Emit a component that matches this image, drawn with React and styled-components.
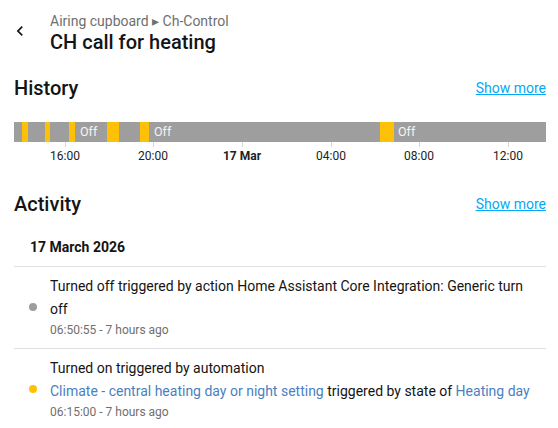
import React from "react";
import styled, { createGlobalStyle } from "styled-components";

const GlobalStyle = createGlobalStyle`
  html, body {
    margin: 0;
    background: #fff;
    font-family: Roboto, "Noto Sans", sans-serif;
    color: #141414;
  }
`;

const Page = styled.div`
  width: 558px;
  height: 428px;
  box-sizing: border-box;
  padding: 0 12px 0 14px;
  overflow: hidden;
`;

const Header = styled.div`
  display: flex;
  align-items: center;
  height: 64px;
  box-sizing: border-box;
  padding-top: 2px;
`;

const BackButton = styled.button`
  width: 20px;
  height: 20px;
  padding: 0;
  margin: -5px 20px 0 -4px;
  border: none;
  background: none;
  display: flex;
  align-items: center;
  justify-content: center;
`;

const Titles = styled.div`
  display: flex;
  flex-direction: column;
`;

const Breadcrumb = styled.div`
  font-size: 14px;
  color: #6f6f6f;
  line-height: 18px;
`;

const Title = styled.div`
  font-size: 20px;
  font-weight: 500;
  line-height: 24px;
  color: #141414;
`;

const SectionHead = styled.div`
  display: flex;
  justify-content: space-between;
  align-items: center;
  height: 48px;
  margin-top: ${(p) => p.$top || 0}px;
`;

const SectionTitle = styled.div`
  font-size: 20px;
  font-weight: 500;
  color: #141414;
`;

const ShowMore = styled.a`
  font-size: 14px;
  color: #03a9f4;
  text-decoration: underline;
  cursor: pointer;
`;

const Timeline = styled.div`
  margin-top: 10px;
`;

const Bar = styled.div`
  position: relative;
  height: 20px;
  background: #9e9e9e;
`;

const OnSegment = styled.div`
  position: absolute;
  top: 0;
  bottom: 0;
  background: #ffc107;
`;

const OffLabel = styled.span`
  position: absolute;
  top: 0;
  line-height: 20px;
  font-size: 12.5px;
  color: #f4f4f4;
`;

const Axis = styled.div`
  position: relative;
  height: 24px;
`;

const Tick = styled.div`
  position: absolute;
  top: 0;
  width: 1px;
  height: 5px;
  background: #d8d8d8;
`;

const TickLabel = styled.span`
  position: absolute;
  top: 7px;
  transform: translateX(-50%);
  font-size: 12px;
  color: #222;
  font-weight: ${(p) => (p.$bold ? 700 : 400)};
  white-space: nowrap;
`;

const DateHead = styled.div`
  font-size: 14px;
  font-weight: 700;
  padding: 11px 0 0 16px;
  height: 39px;
  box-sizing: border-box;
  border-bottom: 1px solid #e0e0e0;
`;

const Entry = styled.div`
  display: flex;
  align-items: center;
  padding: 8px 0 9px 0;
  border-bottom: ${(p) => (p.$last ? "none" : "1px solid #e0e0e0")};
`;

const Dot = styled.span`
  flex: none;
  width: 8px;
  height: 8px;
  border-radius: 50%;
  background: ${(p) => p.$color};
  margin: 0 13px 0 15px;
`;

const EntryBody = styled.div`
  flex: 1;
  padding-right: 16px;
`;

const Message = styled.div`
  font-size: 14px;
  line-height: 23px;
  color: #141414;
`;

const MessageLine = styled.span`
  display: block;
`;

const Link = styled.span`
  color: #4a7fc1;
`;

const Time = styled.div`
  font-size: 12px;
  line-height: 18px;
  color: #6f6f6f;
`;

const segments = [
  [22, 28],
  [45, 50],
  [69, 75],
  [107, 119],
  [140, 149],
  [380, 394],
];

const offLabels = [80, 154, 398];

const ticks = [
  { x: 65, label: "16:00" },
  { x: 153, label: "20:00" },
  { x: 242, label: "17 Mar", bold: true },
  { x: 331, label: "04:00" },
  { x: 419, label: "08:00" },
  { x: 508, label: "12:00" },
];

const X0 = 14;

const App = () => {
  return (
    <>
      <GlobalStyle />
      <Page>
        <Header>
          <BackButton>
            <svg width="20" height="20" viewBox="0 0 24 24">
              <path
                d="M15.41,16.58L10.83,12L15.41,7.41L14,6L8,12L14,18L15.41,16.58Z"
                fill="#141414"
              />
            </svg>
          </BackButton>
          <Titles>
            <Breadcrumb>Airing cupboard ▸ Ch-Control</Breadcrumb>
            <Title>CH call for heating</Title>
          </Titles>
        </Header>

        <SectionHead>
          <SectionTitle>History</SectionTitle>
          <ShowMore>Show more</ShowMore>
        </SectionHead>
        <Timeline>
          <Bar>
            {segments.map(([a, b]) => (
              <OnSegment key={a} style={{ left: a - X0, width: b - a }} />
            ))}
            {offLabels.map((x) => (
              <OffLabel key={x} style={{ left: x - X0 }}>
                Off
              </OffLabel>
            ))}
          </Bar>
          <Axis>
            {ticks.map((t) => (
              <React.Fragment key={t.label}>
                <Tick style={{ left: t.x - X0 }} />
                <TickLabel style={{ left: t.x - X0 }} $bold={t.bold}>
                  {t.label}
                </TickLabel>
              </React.Fragment>
            ))}
          </Axis>
        </Timeline>

        <SectionHead $top={14}>
          <SectionTitle>Activity</SectionTitle>
          <ShowMore>Show more</ShowMore>
        </SectionHead>
        <DateHead>17 March 2026</DateHead>
        <Entry>
          <Dot $color="#9e9e9e" />
          <EntryBody>
            <Message>
              Turned off triggered by action Home Assistant Core Integration:
              Generic turn off
            </Message>
            <Time>06:50:55 - 7 hours ago</Time>
          </EntryBody>
        </Entry>
        <Entry $last>
          <Dot $color="#ffc107" />
          <EntryBody>
            <Message>
              <MessageLine>Turned on triggered by automation</MessageLine>
              <Link>Climate - central heating day or night setting</Link>{" "}
              triggered by state of <Link>Heating day</Link>
            </Message>
            <Time>06:15:00 - 7 hours ago</Time>
          </EntryBody>
        </Entry>
      </Page>
    </>
  );
};

export default App;
